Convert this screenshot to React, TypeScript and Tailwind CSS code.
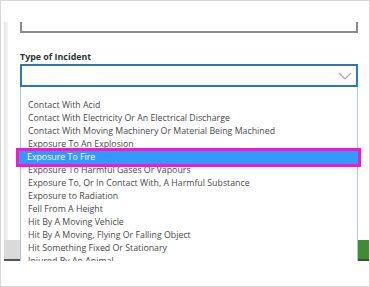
import React from "react";

const incidents = [
  "",
  "Contact With Acid",
  "Contact With Electricity Or An Electrical Discharge",
  "Contact With Moving Machinery Or Material Being Machined",
  "Exposure To An Explosion",
  "Exposure To Fire",
  "Exposure To Harmful Gases Or Vapours",
  "Exposure To, Or In Contact With, A Harmful Substance",
  "Exposure to Radiation",
  "Fell From A Height",
  "Hit By A Moving Vehicle",
  "Hit By A Moving, Flying Or Falling Object",
  "Hit Something Fixed Or Stationary",
  "Injured By An Animal",
];

const selected = "Exposure To Fire";

export default function App() {
  return (
    <div
      className="w-[370px] h-[287px] bg-white border border-[#d6d6d6] overflow-hidden pt-[21px]"
      style={{ fontFamily: '"Open Sans", "Noto Sans", sans-serif' }}
    >
      <div className="flex h-[239px]">
        {/* left edge of the page behind the form */}
        <div className="w-[19px] flex flex-col">
          <div className="flex-1 pl-[3px]">
            <div className="w-[4px] h-full bg-gradient-to-r from-[#e6e6e6] to-[#f4f4f4]" />
          </div>
          <div className="h-[21px] shrink-0 ml-[3px] bg-[#dadada] border-b-2 border-[#555]" />
        </div>

        {/* form column */}
        <div className="w-[338px] flex flex-col">
          <div className="h-[11px] shrink-0 border-x-2 border-b-2 border-[#8c8c8c]" />
          <div className="mt-[18px] h-[12px] shrink-0 text-[8.9px] leading-[12px] font-bold text-[#333]">
            Type of Incident
          </div>
          <div className="mt-[1px] h-[23px] shrink-0 border-2 border-[#2b79b5] flex items-center justify-end pr-[4px]">
            <svg width="14" height="8" viewBox="0 0 14 8">
              <polyline points="1,1 7,7 13,1" fill="none" stroke="#a8a8a8" strokeWidth="1.2" />
            </svg>
          </div>
          <div className="flex-1 min-h-0 border-x border-[#b4c6e0] overflow-y-clip pt-[12px]">
            {incidents.slice(1).map((item) =>
              item === selected ? (
                <div key={item} className="relative h-[13px]">
                  <div className="absolute -left-[2px] -right-[1px] inset-y-0 bg-[#3399ff] outline-[3px] outline-solid outline-[#ff14c8] text-white text-[8.8px] leading-[13px] pl-[8px] whitespace-nowrap">
                    {item}
                  </div>
                </div>
              ) : (
                <div
                  key={item}
                  className="h-[13px] text-[8.8px] leading-[13px] pl-[7px] text-[#4a4a4a] whitespace-nowrap"
                >
                  {item}
                </div>
              )
            )}
          </div>
        </div>

        {/* right edge */}
        <div className="flex-1 flex flex-col">
          <div className="flex-1" />
          <div className="h-[21px] shrink-0 bg-[#3f8c31] border-b-2 border-[#2f5f27]" />
        </div>
      </div>
    </div>
  );
}
